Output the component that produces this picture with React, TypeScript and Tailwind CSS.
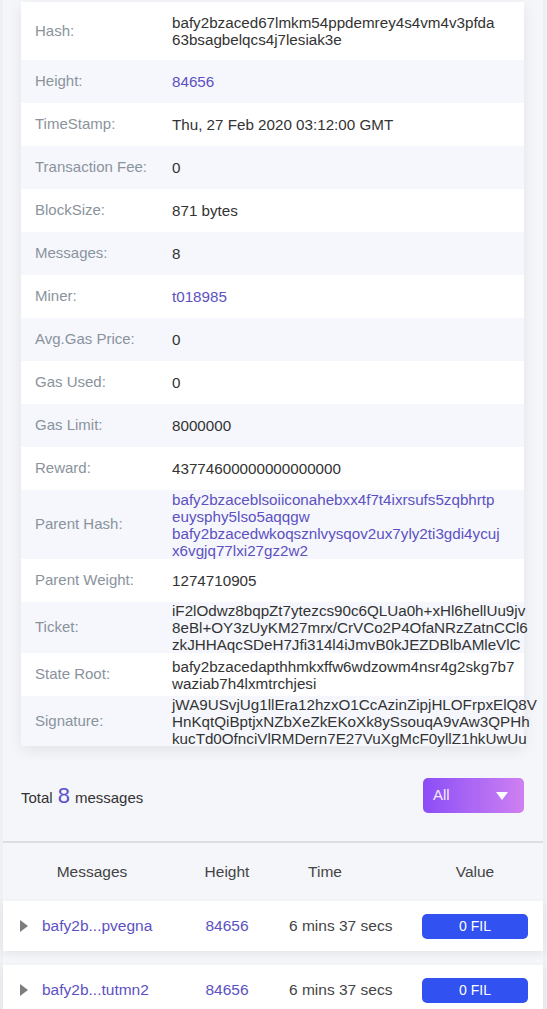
import React from "react";

interface Row {
  label: string;
  lines: string[];
  link?: boolean;
  h: string;
}

const rows: Row[] = [
  { label: "Hash:", lines: ["bafy2bzaced67lmkm54ppdemrey4s4vm4v3pfda", "63bsagbelqcs4j7lesiak3e"], h: "h-[58px]" },
  { label: "Height:", lines: ["84656"], link: true, h: "h-[43px]" },
  { label: "TimeStamp:", lines: ["Thu, 27 Feb 2020 03:12:00 GMT"], h: "h-[43px]" },
  { label: "Transaction Fee:", lines: ["0"], h: "h-[43px]" },
  { label: "BlockSize:", lines: ["871 bytes"], h: "h-[43px]" },
  { label: "Messages:", lines: ["8"], h: "h-[43px]" },
  { label: "Miner:", lines: ["t018985"], link: true, h: "h-[43px]" },
  { label: "Avg.Gas Price:", lines: ["0"], h: "h-[43px]" },
  { label: "Gas Used:", lines: ["0"], h: "h-[43px]" },
  { label: "Gas Limit:", lines: ["8000000"], h: "h-[43px]" },
  { label: "Reward:", lines: ["43774600000000000000"], h: "h-[43px]" },
  {
    label: "Parent Hash:",
    lines: [
      "bafy2bzaceblsoiiconahebxx4f7t4ixrsufs5zqbhrtp",
      "euysphy5lso5aqqgw",
      "bafy2bzacedwkoqsznlvysqov2ux7yly2ti3gdi4ycuj",
      "x6vgjq77lxi27gz2w2",
    ],
    link: true,
    h: "h-[69px]",
  },
  { label: "Parent Weight:", lines: ["1274710905"], h: "h-[43px]" },
  {
    label: "Ticket:",
    lines: [
      "iF2lOdwz8bqpZt7ytezcs90c6QLUa0h+xHl6hellUu9jv",
      "8eBl+OY3zUyKM27mrx/CrVCo2P4OfaNRzZatnCCl6",
      "zkJHHAqcSDeH7Jfi314l4iJmvB0kJEZDBlbAMleVlC",
    ],
    h: "h-[51px]",
  },
  { label: "State Root:", lines: ["bafy2bzacedapthhmkxffw6wdzowm4nsr4g2skg7b7", "waziab7h4lxmtrchjesi"], h: "h-[43px]" },
  {
    label: "Signature:",
    lines: [
      "jWA9USvjUg1llEra12hzxO1CcAzinZipjHLOFrpxElQ8V",
      "HnKqtQiBptjxNZbXeZkEKoXk8ySsouqA9vAw3QPHh",
      "kucTd0OfnciVlRMDern7E27VuXgMcF0yllZ1hkUwUu",
    ],
    h: "h-[50px]",
  },
];

const messages = [
  { id: "bafy2b...pvegna", height: "84656", time: "6 mins 37 secs", value: "0 FIL" },
  { id: "bafy2b...tutmn2", height: "84656", time: "6 mins 37 secs", value: "0 FIL" },
];

export default function App() {
  return (
    <div
      className="min-h-screen bg-[#eef0f4] px-[3px] overflow-hidden"
      style={{ fontFamily: '"Liberation Sans", Arial, sans-serif' }}
    >
      <div className="w-[540px] bg-[#f5f6fa] pt-[2px] min-h-screen">
        <div className="ml-[18px] w-[503px] bg-white shadow-[0_4px_14px_rgba(0,0,0,0.08)]">
          {rows.map((row, i) => (
            <div
              key={row.label}
              className={`flex items-center ${row.h} ${i % 2 === 1 ? "bg-[#f5f7fc]" : "bg-white"}`}
            >
              <div className="w-[151px] shrink-0 pl-[14px] text-[15px] text-[#8a939c]">
                {row.label}
              </div>
              <div
                className={`text-[15.2px] leading-[17px] whitespace-nowrap ${
                  row.link ? "text-[#5d51c2]" : "text-[#333333]"
                }`}
              >
                {row.lines.map((l) => (
                  <div key={l}>{l}</div>
                ))}
              </div>
            </div>
          ))}
        </div>

        <div className="flex items-center justify-between h-[75px] mt-[12px] pl-[18px] pr-[19px]">
          <div className="text-[15px] text-[#333333] flex items-baseline">
            <span>Total</span>
            <span className="text-[22px] text-[#5a4fcf] mx-[5px]">8</span>
            <span>messages</span>
          </div>
          <div className="flex h-[35px] w-[101px] rounded-[5px] overflow-hidden bg-gradient-to-r from-[#8c4cf6] to-[#cf7ff1]">
            <div className="w-[55px] flex items-center pl-[10px] text-[15px] text-[#f3eaff]">All</div>
            <div className="flex-1 flex items-center justify-center border-l border-[#a866ee]">
              <svg width="12" height="8" viewBox="0 0 12 8">
                <path d="M0 0 L12 0 L6 8 Z" fill="#ffffff" />
              </svg>
            </div>
          </div>
        </div>

        <div className="border-t-2 border-[#dcdde1] mt-[8px]" />

        <div className="flex items-center h-[58px] text-[15.5px] text-[#444444]">
          <div className="w-[178px] text-center">Messages</div>
          <div className="w-[92px] text-center">Height</div>
          <div className="w-[104px] text-center">Time</div>
          <div className="ml-[30px] w-[136px] text-center">Value</div>
        </div>

        <div className="flex flex-col gap-[14px]">
          {messages.map((m) => (
            <div
              key={m.id}
              className="flex items-center h-[50px] bg-white shadow-[0_3px_8px_rgba(0,0,0,0.07)] text-[15.5px]"
            >
              <div className="w-[178px] flex items-center pl-[17px]">
                <svg width="8" height="12" viewBox="0 0 8 12">
                  <path d="M0 0 L8 6 L0 12 Z" fill="#7d7d7d" />
                </svg>
                <span className="ml-[14px] text-[#5d51c2]">{m.id}</span>
              </div>
              <div className="w-[92px] text-center text-[#5d51c2]">{m.height}</div>
              <div className="w-[104px] pl-[16px] whitespace-nowrap text-[#444444]">{m.time}</div>
              <div className="ml-[45px] w-[106px] h-[25px] rounded-[5px] bg-[#3152f0] flex items-center justify-center text-[14px] text-white">
                {m.value}
              </div>
            </div>
          ))}
        </div>
      </div>
    </div>
  );
}
